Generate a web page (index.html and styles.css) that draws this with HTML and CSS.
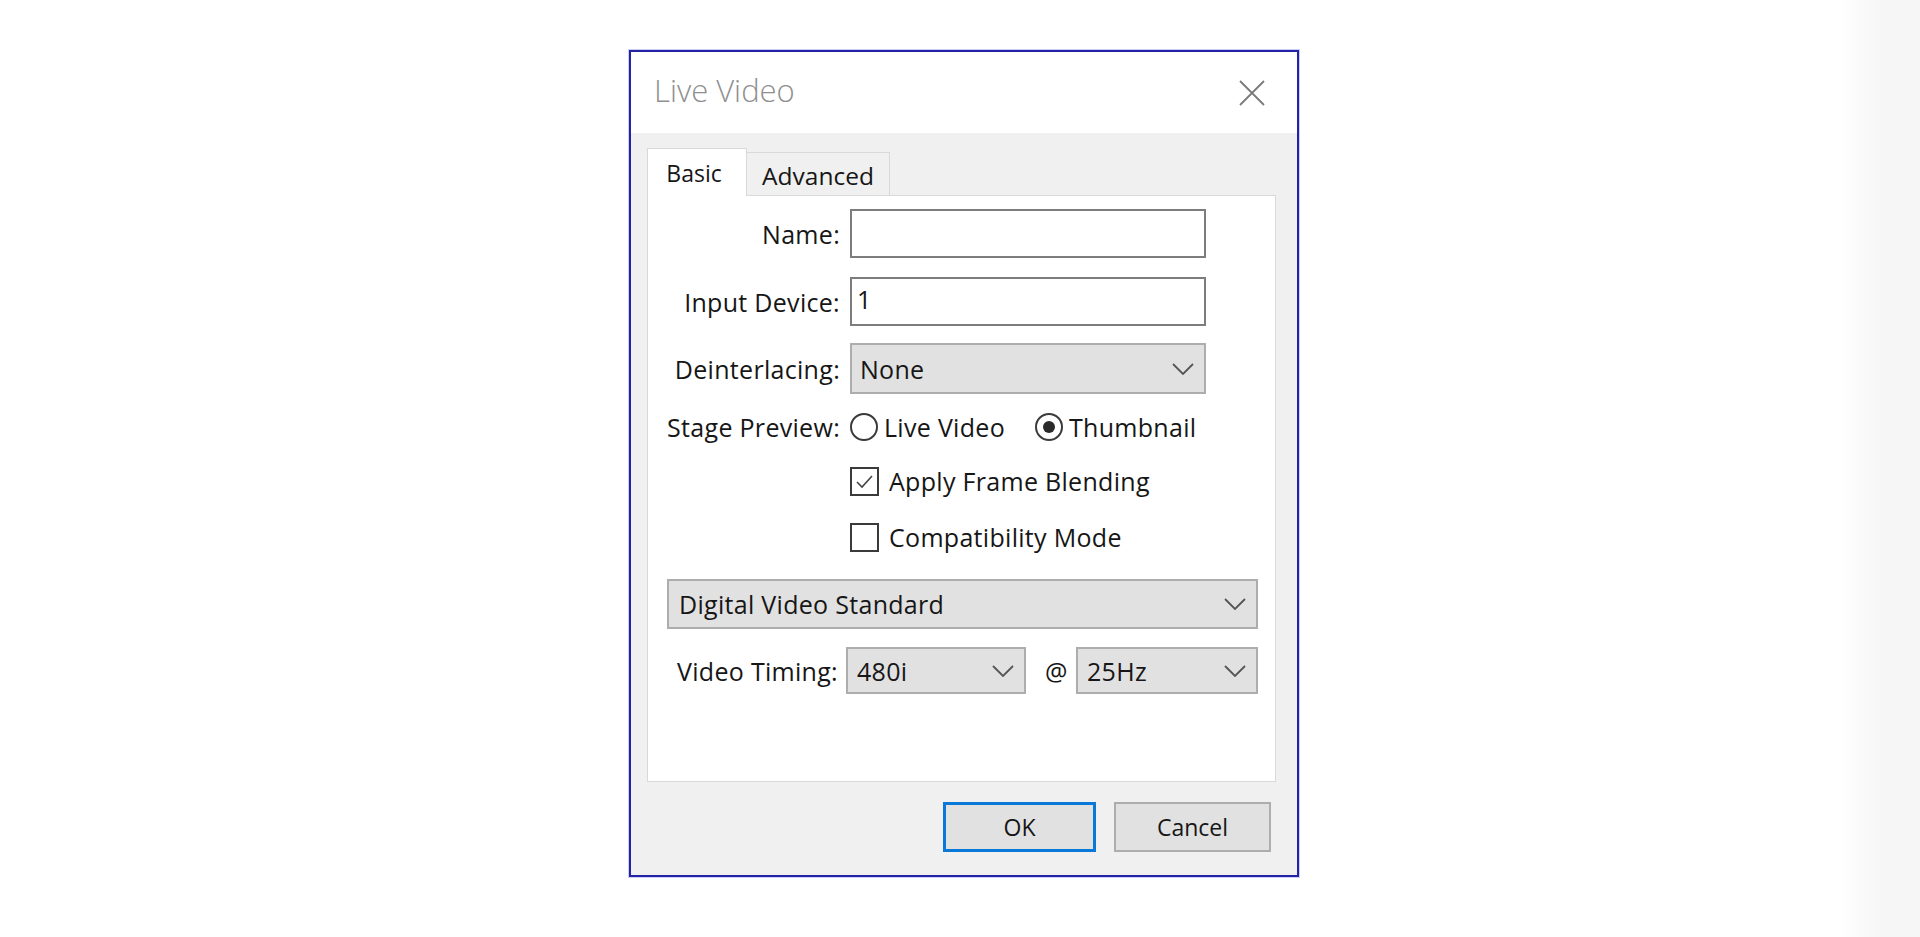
FILE: index.html
```html
<!DOCTYPE html>
<html lang="en">
<head>
<meta charset="utf-8">
<title>Live Video</title>
<link rel="stylesheet" href="styles.css">
</head>
<body>
<div class="page">
  <main class="stage">
    <div class="dialog">
      <div class="titlebar">
        <span class="title">Live Video</span>
        <svg class="close" width="26" height="26" viewBox="0 0 26 26"><path d="M1 1 L25 25 M25 1 L1 25" stroke="#7a7a7a" stroke-width="1.8" fill="none"/></svg>
      </div>
      <div class="body">
        <div class="tabs">
          <div class="tab active">Basic</div>
          <div class="tab">Advanced</div>
        </div>
        <div class="panel">
          <div class="row r1">
            <div class="lbl">Name:</div>
            <div class="field"></div>
          </div>
          <div class="row r2">
            <div class="lbl">Input Device:</div>
            <div class="field"><span class="val">1</span></div>
          </div>
          <div class="row r3">
            <div class="lbl">Deinterlacing:</div>
            <div class="select wide"><span>None</span><svg class="chev" width="22" height="12" viewBox="0 0 22 12"><path d="M1 1 L11 11 L21 1" stroke="#555" stroke-width="1.8" fill="none"/></svg></div>
          </div>
          <div class="row r4">
            <div class="lbl">Stage Preview:</div>
            <span class="radio"></span><span class="opt">Live Video</span>
            <span class="radio on second"></span><span class="opt">Thumbnail</span>
          </div>
          <div class="row r5">
            <span class="check"><svg width="25" height="25" viewBox="0 0 25 25"><path d="M5 13 L10 18 L20 7" stroke="#444" stroke-width="1.6" fill="none"/></svg></span><span class="copt">Apply Frame Blending</span>
          </div>
          <div class="row r6">
            <span class="check"></span><span class="copt">Compatibility Mode</span>
          </div>
          <div class="select std"><span>Digital Video Standard</span><svg class="chev" width="22" height="12" viewBox="0 0 22 12"><path d="M1 1 L11 11 L21 1" stroke="#555" stroke-width="1.8" fill="none"/></svg></div>
          <div class="row r7">
            <div class="lbl vt">Video Timing:</div>
            <div class="select small"><span>480i</span><svg class="chev" width="22" height="12" viewBox="0 0 22 12"><path d="M1 1 L11 11 L21 1" stroke="#555" stroke-width="1.8" fill="none"/></svg></div>
            <span class="at">@</span>
            <div class="select small hz"><span>25Hz</span><svg class="chev" width="22" height="12" viewBox="0 0 22 12"><path d="M1 1 L11 11 L21 1" stroke="#555" stroke-width="1.8" fill="none"/></svg></div>
          </div>
        </div>
        <div class="footer">
          <button class="btn ok">OK</button>
          <button class="btn cancel">Cancel</button>
        </div>
      </div>
    </div>
  </main>
  <div class="strip"></div>
</div>
</body>
</html>
```
FILE: styles.css
```css
html, body {
  margin: 0;
  padding: 0;
}
body {
  background: #ffffff;
  font-family: "Open Sans", "Noto Sans", sans-serif;
  color: #161616;
}
.page {
  display: flex;
  height: 937px;
  overflow: hidden;
}
.stage {
  flex: 1;
  box-sizing: border-box;
  padding: 50px 0 0 629px;
}
.strip {
  width: 80px;
  background: linear-gradient(to right, #ffffff 0px, #f6f6f6 40px, #f6f6f6 80px);
}
.dialog {
  width: 670px;
  height: 827px;
  box-sizing: border-box;
  border: 2px solid #2323a6;
  box-shadow: 0 0 0 1px rgba(110, 110, 235, 0.35);
  background: #f0f0f0;
  display: flex;
  flex-direction: column;
}
.titlebar {
  height: 81px;
  flex: none;
  background: #ffffff;
  display: flex;
  align-items: center;
  justify-content: space-between;
  padding: 0 32px 0 23px;
}
.title {
  font-size: 31px;
  font-weight: 300;
  color: #8f8f8f;
  margin-top: -5px;
}
.body {
  flex: 1;
  display: flex;
  flex-direction: column;
  padding: 15px 21px 0 16px;
}
.tabs {
  display: flex;
  align-items: flex-end;
  height: 48px;
  margin-bottom: -1px;
  position: relative;
  z-index: 1;
}
.tab {
  box-sizing: border-box;
  display: flex;
  align-items: center;
  justify-content: center;
  font-size: 23px;
  color: #161616;
  border: 1px solid #d9d9d9;
  border-bottom: none;
}
.tab.active {
  width: 100px;
  height: 48px;
  background: #ffffff;
  padding-right: 6px;
}
.tab:not(.active) {
  width: 143px;
  height: 43px;
  margin-bottom: 1px;
  border-left: none;
  background: #f0f0f0;
  padding-top: 2px;
  font-size: 24.5px;
}
.panel {
  height: 587px;
  box-sizing: border-box;
  background: #ffffff;
  border: 1px solid #d9d9d9;
  padding-top: 13px;
  display: flex;
  flex-direction: column;
  font-size: 25px;
  letter-spacing: 0.3px;
}
.row {
  display: flex;
  align-items: center;
}
.lbl {
  width: 192px;
  margin-right: 10px;
  text-align: right;
  white-space: nowrap;
}
.field {
  width: 356px;
  height: 49px;
  box-sizing: border-box;
  border: 2px solid #7d7d7d;
  background: #ffffff;
  display: flex;
  align-items: center;
}
.val {
  padding-left: 5px;
  margin-top: -5px;
}
.r2 { margin-top: 19px; }
.r3 { margin-top: 17px; }
.r4 { margin-top: 15px; height: 36px; }
.r5 { margin-top: 18px; height: 36px; padding-left: 202px; }
.r6 { margin-top: 20px; height: 36px; padding-left: 202px; }
.r7 { margin-top: 18px; }
.select {
  box-sizing: border-box;
  background: #e1e1e1;
  border: 2px solid #adadad;
  display: flex;
  align-items: center;
  justify-content: space-between;
  padding: 0 10px 0 8px;
}
.select.wide {
  width: 356px;
  height: 51px;
}
.select.std {
  margin-top: 24px;
  margin-left: 19px;
  width: 591px;
  height: 50px;
  padding-left: 10px;
}
.select.small {
  width: 180px;
  height: 47px;
  padding-left: 9px;
}
.select.hz {
  width: 182px;
}
.lbl.vt {
  width: 190px;
  margin-right: 8px;
}
.at {
  margin: 0 9px 0 19px;
  width: 22px;
}
.chev {
  flex: none;
}
.radio {
  width: 28px;
  height: 28px;
  box-sizing: border-box;
  border: 2px solid #3a3a3a;
  border-radius: 50%;
  background: #ffffff;
  display: flex;
  align-items: center;
  justify-content: center;
  flex: none;
}
.radio.on::after {
  content: "";
  width: 12px;
  height: 12px;
  border-radius: 50%;
  background: #2a2a2a;
}
.radio.second {
  margin-left: 30px;
}
.opt {
  margin-left: 6px;
}
.check {
  width: 29px;
  height: 29px;
  box-sizing: border-box;
  border: 2px solid #3a3a3a;
  background: #ffffff;
  display: flex;
  align-items: center;
  justify-content: center;
  flex: none;
}
.copt {
  margin-left: 10px;
}
.footer {
  display: flex;
  justify-content: flex-end;
  gap: 18px;
  margin-top: 20px;
  padding-right: 5px;
}
.btn {
  height: 50px;
  box-sizing: border-box;
  background: #e1e1e1;
  font-family: "Open Sans", "Noto Sans", sans-serif;
  font-size: 23px;
  color: #161616;
  padding: 0;
}
.btn.ok {
  width: 153px;
  border: 3px solid #0a78d7;
}
.btn.cancel {
  width: 157px;
  border: 2px solid #adadad;
}
```
